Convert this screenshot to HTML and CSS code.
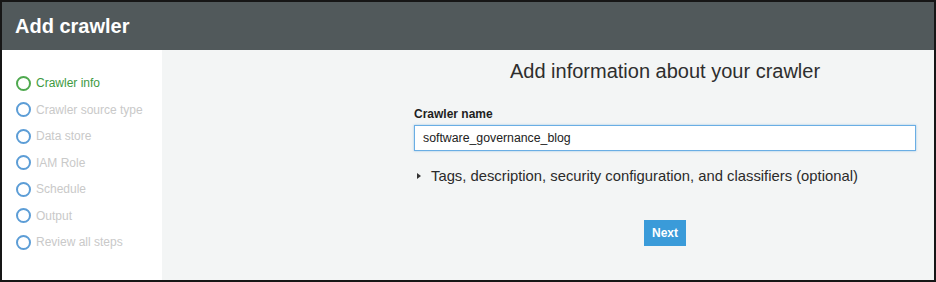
FILE: index.html
```html
<!DOCTYPE html>
<html>

<head>
    <meta name="viewport" content="width=device-width, initial-scale=1">
    <link rel="stylesheet" href="styles.css">
</head>

<body>
    <div id="frame">
        <div id="header">Add crawler</div>
        <div id="body">
            <ul id="steps">
                <li class="step current"><span class="dot"></span>Crawler info</li>
                <li class="step"><span class="dot"></span>Crawler source type</li>
                <li class="step"><span class="dot"></span>Data store</li>
                <li class="step"><span class="dot"></span>IAM Role</li>
                <li class="step"><span class="dot"></span>Schedule</li>
                <li class="step"><span class="dot"></span>Output</li>
                <li class="step"><span class="dot"></span>Review all steps</li>
            </ul>
            <div id="main">
                <div class="column">
                    <h2 class="title">Add information about your crawler</h2>
                    <label for="crawlerName" class="label">Crawler name</label>
                    <input class="input" id="crawlerName" value="software_governance_blog">
                    <div class="expander"><span class="caret"></span>Tags, description, security configuration, and classifiers (optional)</div>
                    <button id="next">Next</button>
                </div>
            </div>
        </div>
    </div>
</body>

</html>
```

FILE: styles.css
```css
body {
    margin: 0;
    font-family: "Liberation Sans", Arial, sans-serif;
}

#frame {
    width: 936px;
    height: 282px;
    box-sizing: border-box;
    border: 2px solid #161616;
    display: flex;
    flex-direction: column;
}

#header {
    height: 48px;
    flex: none;
    background-color: #51595b;
    color: white;
    font-size: 20px;
    font-weight: bold;
    padding-left: 13px;
    line-height: 48px;
}

#body {
    flex: 1;
    display: flex;
}

/* Step list on the left */
#steps {
    width: 160px;
    flex: none;
    background-color: white;
    margin: 0;
    padding: 20px 0 0 14px;
    box-sizing: border-box;
    list-style: none;
}

.step {
    height: 26.5px;
    display: flex;
    align-items: center;
    font-size: 12px;
    color: #c9c9c9;
}

.step .dot {
    width: 11px;
    height: 11px;
    border: 2px solid #5c9dd6;
    border-radius: 50%;
    margin-right: 5px;
}

.step.current {
    color: #3e9a42;
}

.step.current .dot {
    border-color: #4fa94f;
}

/* Form area */
#main {
    flex: 1;
    background-color: #f3f5f5;
    padding-left: 252px;
}

.column {
    width: 502px;
    display: flex;
    flex-direction: column;
    padding-top: 10px;
}

.title {
    margin: 0;
    text-align: center;
    font-size: 20px;
    font-weight: normal;
    line-height: 22px;
    color: #2e2e2e;
}

.label {
    margin-top: 25px;
    font-size: 12px;
    font-weight: bold;
    line-height: 14px;
    color: #1e1e1e;
}

.input {
    margin-top: 4px;
    height: 26px;
    box-sizing: border-box;
    border: 1px solid #6aaee4;
    box-shadow: 0 0 2px rgba(90, 160, 220, 0.6);
    padding: 0 8px;
    font-family: inherit;
    font-size: 12.3px;
    color: #222;
    background-color: white;
    outline: none;
}

.expander {
    margin-top: 16px;
    font-size: 14.8px;
    line-height: 18px;
    color: #2b2b2b;
    display: flex;
    align-items: center;
    padding-left: 3px;
}

.caret {
    width: 0;
    height: 0;
    border-top: 3.5px solid transparent;
    border-bottom: 3.5px solid transparent;
    border-left: 4px solid #333;
    margin-right: 10px;
}

#next {
    align-self: center;
    margin-top: 35px;
    width: 42px;
    height: 26px;
    border: none;
    background-color: #3a9bd9;
    color: white;
    font-family: inherit;
    font-size: 12px;
    font-weight: bold;
    padding: 0;
}
```
